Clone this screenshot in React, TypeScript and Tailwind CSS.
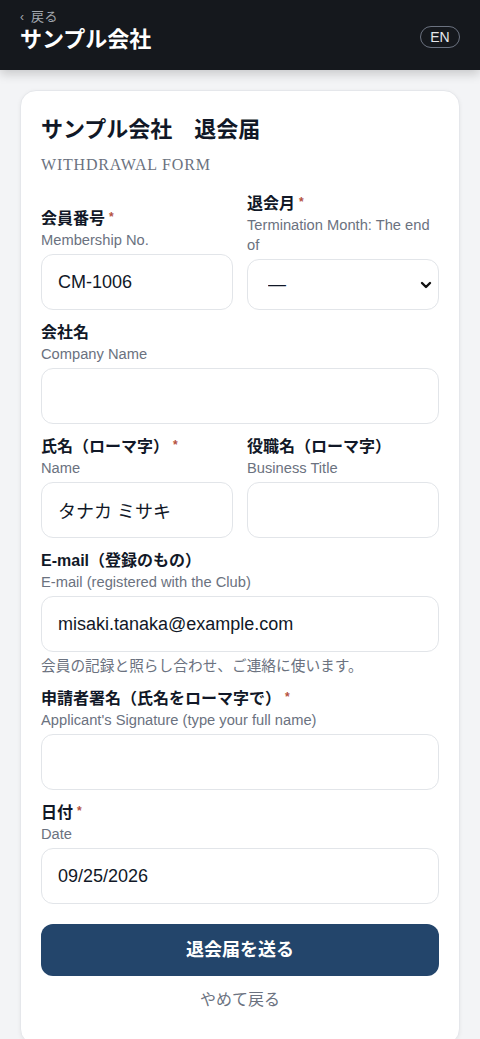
import React from "react";

const font = { fontFamily: '"Liberation Sans", "Noto Sans CJK JP", sans-serif' };

function Req() {
  return <span className="ml-1 align-top text-[12px] leading-[18px] text-[#b5523f]">*</span>;
}

function Label({ ja, en, req }: { ja: string; en: string; req?: boolean }) {
  return (
    <div>
      <div className="text-[16px] font-bold leading-[22px] text-[#111827]">
        {ja}
        {req && <Req />}
      </div>
      <div className="text-[14.7px] leading-5 text-[#6b7280]">{en}</div>
    </div>
  );
}

function Input({ value }: { value?: string }) {
  return (
    <input
      readOnly
      value={value ?? ""}
      className="mt-1 box-border h-[56px] w-full rounded-xl border border-[#e2e5e9] bg-white px-4 text-[18px] text-[#111827] outline-none"
      style={font}
    />
  );
}

export default function App() {
  return (
    <div className="min-h-screen bg-[#f3f4f6]" style={font}>
      <header className="relative z-10 flex h-[70px] items-start justify-between bg-[#15181d] px-5 pt-2 shadow-[0_4px_10px_rgba(0,0,0,0.18)]">
        <div className="flex flex-col">
          <div className="flex items-center text-[13px] leading-[18px] text-[#a3a8b0]">
            <span className="mr-[7px] text-[12px]">‹</span>
            <span className="tracking-[0.5px]">戻る</span>
          </div>
          <div className="text-[22px] font-bold leading-[28px] text-white">サンプル会社</div>
        </div>
        <div className="mt-[18px] flex h-[22px] w-[40px] items-center justify-center rounded-full border border-[#6b7280] text-[14px] text-[#e5e7eb]">
          EN
        </div>
      </header>
      <main className="px-5 pt-5 pb-6">
        <div className="rounded-2xl border border-[#e5e7eb] bg-white px-5 pt-6 pb-8 shadow-[0_1px_4px_rgba(0,0,0,0.06)]">
          <h1 className="text-[22px] font-bold leading-[30px] text-[#111827]">サンプル会社　退会届</h1>
          <div
            className="mt-2 text-[16px] leading-6 tracking-wider text-[#6b7280]"
            style={{ fontFamily: '"Liberation Serif", serif' }}
          >
            WITHDRAWAL FORM
          </div>

          <div className="mt-4 flex flex-col gap-3">
            <div className="grid grid-cols-2 items-end gap-x-[14px]">
              <div>
                <Label ja="会員番号" en="Membership No." req />
                <Input value="CM-1006" />
              </div>
              <div>
                <Label ja="退会月" en="Termination Month: The end of" req />
                <div className="relative mt-1">
                  <select
                    className="box-border h-[51px] w-full appearance-none rounded-xl border border-[#e2e5e9] bg-white pl-5 pr-8 text-[18px] text-[#111827]"
                    style={font}
                    defaultValue="—"
                  >
                    <option>—</option>
                  </select>
                  <svg
                    className="pointer-events-none absolute right-[7px] top-1/2 -translate-y-1/2"
                    width="12"
                    height="12"
                    viewBox="0 0 12 12"
                  >
                    <path d="M2 4 L6 8 L10 4" fill="none" stroke="#111" strokeWidth="2.4" strokeLinecap="round" strokeLinejoin="round" />
                  </svg>
                </div>
              </div>
            </div>

            <div>
              <Label ja="会社名" en="Company Name" />
              <Input />
            </div>

            <div className="grid grid-cols-2 items-end gap-x-[14px]">
              <div>
                <Label ja="氏名（ローマ字）" en="Name" req />
                <Input value="タナカ ミサキ" />
              </div>
              <div>
                <Label ja="役職名（ローマ字）" en="Business Title" />
                <Input />
              </div>
            </div>

            <div>
              <Label ja="E-mail（登録のもの）" en="E-mail (registered with the Club)" />
              <Input value="misaki.tanaka@example.com" />
              <div className="mt-1 text-[14.7px] leading-5 text-[#6b7280]">
                会員の記録と照らし合わせ、ご連絡に使います。
              </div>
            </div>

            <div>
              <Label ja="申請者署名（氏名をローマ字で）" en="Applicant's Signature (type your full name)" req />
              <Input />
            </div>

            <div>
              <Label ja="日付" en="Date" req />
              <Input value="09/25/2026" />
            </div>
          </div>

          <button
            className="mt-5 flex h-[52px] w-full items-center justify-center rounded-xl bg-[#23456b] text-[18px] font-bold text-white"
            style={font}
          >
            退会届を送る
          </button>
          <div className="mt-3 text-center text-[16px] leading-6 text-[#6b7280]">やめて戻る</div>
        </div>
      </main>
    </div>
  );
}
